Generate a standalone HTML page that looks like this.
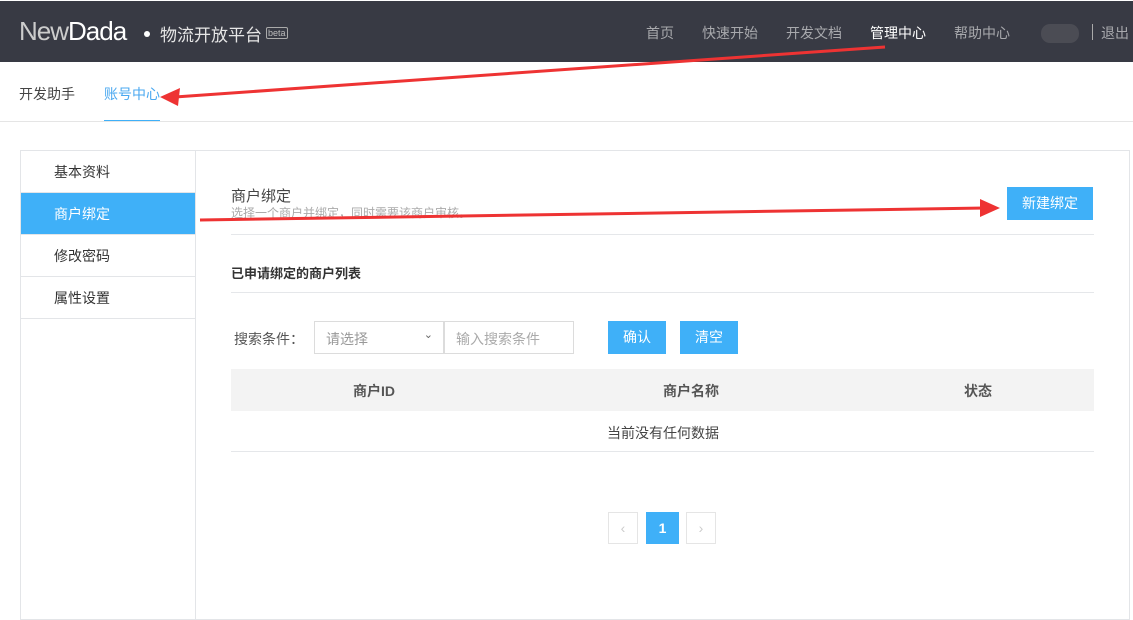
<!DOCTYPE html>
<html><head><meta charset="utf-8"><style>
*{margin:0;padding:0;box-sizing:border-box}
body{width:1133px;height:609px;overflow:hidden;background:#fff;font-family:"Liberation Sans","Noto Sans CJK SC",sans-serif;font-size:14px;color:#333;position:relative}
.hd{position:absolute;left:0;top:1px;width:1133px;height:61px;background:#383a44}
.abs{position:absolute;white-space:nowrap}
.nav{color:#a8a9ad;font-size:14px;top:23px}
.sub{top:84px;font-size:14px}
.box{position:absolute;left:20px;top:150px;width:1110px;height:470px;border:1px solid #e3e5e8}
.side{position:absolute;left:20px;top:150px;width:176px;height:470px;border-right:1px solid #e3e5e8}
.si{position:absolute;left:1px;width:174px;height:42px;line-height:42px;padding-left:33px;border-bottom:1px solid #e3e5e8;font-size:14px}
.line{position:absolute;left:231px;width:863px;height:1px;background:#e5e7ea}
.btn{position:absolute;background:#3fb0f8;color:#fff;text-align:center;font-size:14px}
</style></head><body>
<div class="hd"></div>
<div class="abs" style="left:19px;top:16px;font-size:26px;color:#fff;letter-spacing:-1px"><span style="color:#ccc">New</span>Dada</div>
<div class="abs" style="left:144px;top:31px;width:6px;height:6px;border-radius:3px;background:#fff"></div>
<div class="abs" style="left:160px;top:21px;font-size:17px;color:#e6e6e6">物流开放平台</div>
<div class="abs" style="left:266px;top:27px;font-size:9px;color:#bbb;border:1px solid #aaa;border-radius:2px;padding:0 1px;line-height:10px">beta</div>
<div class="abs nav" style="left:646px">首页</div>
<div class="abs nav" style="left:702px">快速开始</div>
<div class="abs nav" style="left:786px">开发文档</div>
<div class="abs nav" style="left:870px;color:#fff">管理中心</div>
<div class="abs nav" style="left:954px">帮助中心</div>
<div class="abs" style="left:1041px;top:24px;width:38px;height:19px;border-radius:9px;background:#4b4c54"></div>
<div class="abs" style="left:1092px;top:24px;width:1px;height:16px;background:#aaa"></div>
<div class="abs nav" style="left:1101px">退出</div>
<div class="abs sub" style="left:19px;color:#444">开发助手</div>
<div class="abs sub" style="left:104px;color:#4aa8f0">账号中心</div>
<div class="abs" style="left:104px;top:120px;width:56px;height:2px;background:#3fb0f8"></div>
<div class="abs" style="left:0;top:121px;width:1133px;height:1px;background:#e5e5e5"></div>
<div class="box"></div>
<div class="side"></div>
<div class="si" style="left:21px;top:151px">基本资料</div>
<div class="si" style="left:21px;top:193px;background:#3fb0f8;color:#fff">商户绑定</div>
<div class="si" style="left:21px;top:235px">修改密码</div>
<div class="si" style="left:21px;top:277px">属性设置</div>
<div class="abs" style="left:231px;top:185px;font-size:15px;color:#444">商户绑定</div>
<div class="abs" style="left:231px;top:204px;font-size:12px;color:#aaa">选择一个商户并绑定，同时需要该商户审核。</div>
<div class="btn" style="left:1007px;top:187px;width:86px;height:33px;line-height:33px">新建绑定</div>
<div class="line" style="top:234px"></div>
<div class="abs" style="left:231px;top:263px;font-weight:bold;font-size:13px;color:#333">已申请绑定的商户列表</div>
<div class="line" style="top:292px"></div>
<div class="abs" style="left:234px;top:329px;color:#555">搜索条件：</div>
<div class="abs" style="left:314px;top:321px;width:130px;height:33px;border:1px solid #dcdcdc;padding:7px 11px;color:#999">请选择<span style="position:absolute;right:10px;top:6px;font-size:11px;color:#666">⌄</span></div>
<div class="abs" style="left:444px;top:321px;width:130px;height:33px;border:1px solid #dcdcdc;padding:7px 11px;color:#aaa">输入搜索条件</div>
<div class="btn" style="left:608px;top:321px;width:58px;height:33px;line-height:33px">确认</div>
<div class="btn" style="left:680px;top:321px;width:58px;height:33px;line-height:33px">清空</div>
<div class="abs" style="left:231px;top:369px;width:863px;height:42px;background:#f3f3f3"></div>
<div class="abs" style="left:353px;top:381px;font-weight:bold;color:#555">商户ID</div>
<div class="abs" style="left:663px;top:381px;font-weight:bold;color:#555">商户名称</div>
<div class="abs" style="left:964px;top:381px;font-weight:bold;color:#555">状态</div>
<div class="abs" style="left:607px;top:423px;color:#444">当前没有任何数据</div>
<div class="line" style="top:451px"></div>
<div class="abs" style="left:608px;top:512px;width:30px;height:32px;border:1px solid #e5e5e5;color:#ccc;text-align:center;line-height:30px">‹</div>
<div class="btn" style="left:646px;top:512px;width:33px;height:32px;line-height:32px;font-weight:bold">1</div>
<div class="abs" style="left:686px;top:512px;width:30px;height:32px;border:1px solid #e5e5e5;color:#ccc;text-align:center;line-height:30px">›</div>
<svg class="abs" style="left:0;top:0" width="1133" height="609">
<line x1="885" y1="47" x2="175" y2="97" stroke="#ee3333" stroke-width="3"/>
<polygon points="160,97 180,88 178,106" fill="#ee3333"/>
<line x1="200" y1="220" x2="985" y2="208" stroke="#ee3333" stroke-width="3"/>
<polygon points="1000,208 980,199 980,217" fill="#ee3333"/>
</svg>
</body></html>
